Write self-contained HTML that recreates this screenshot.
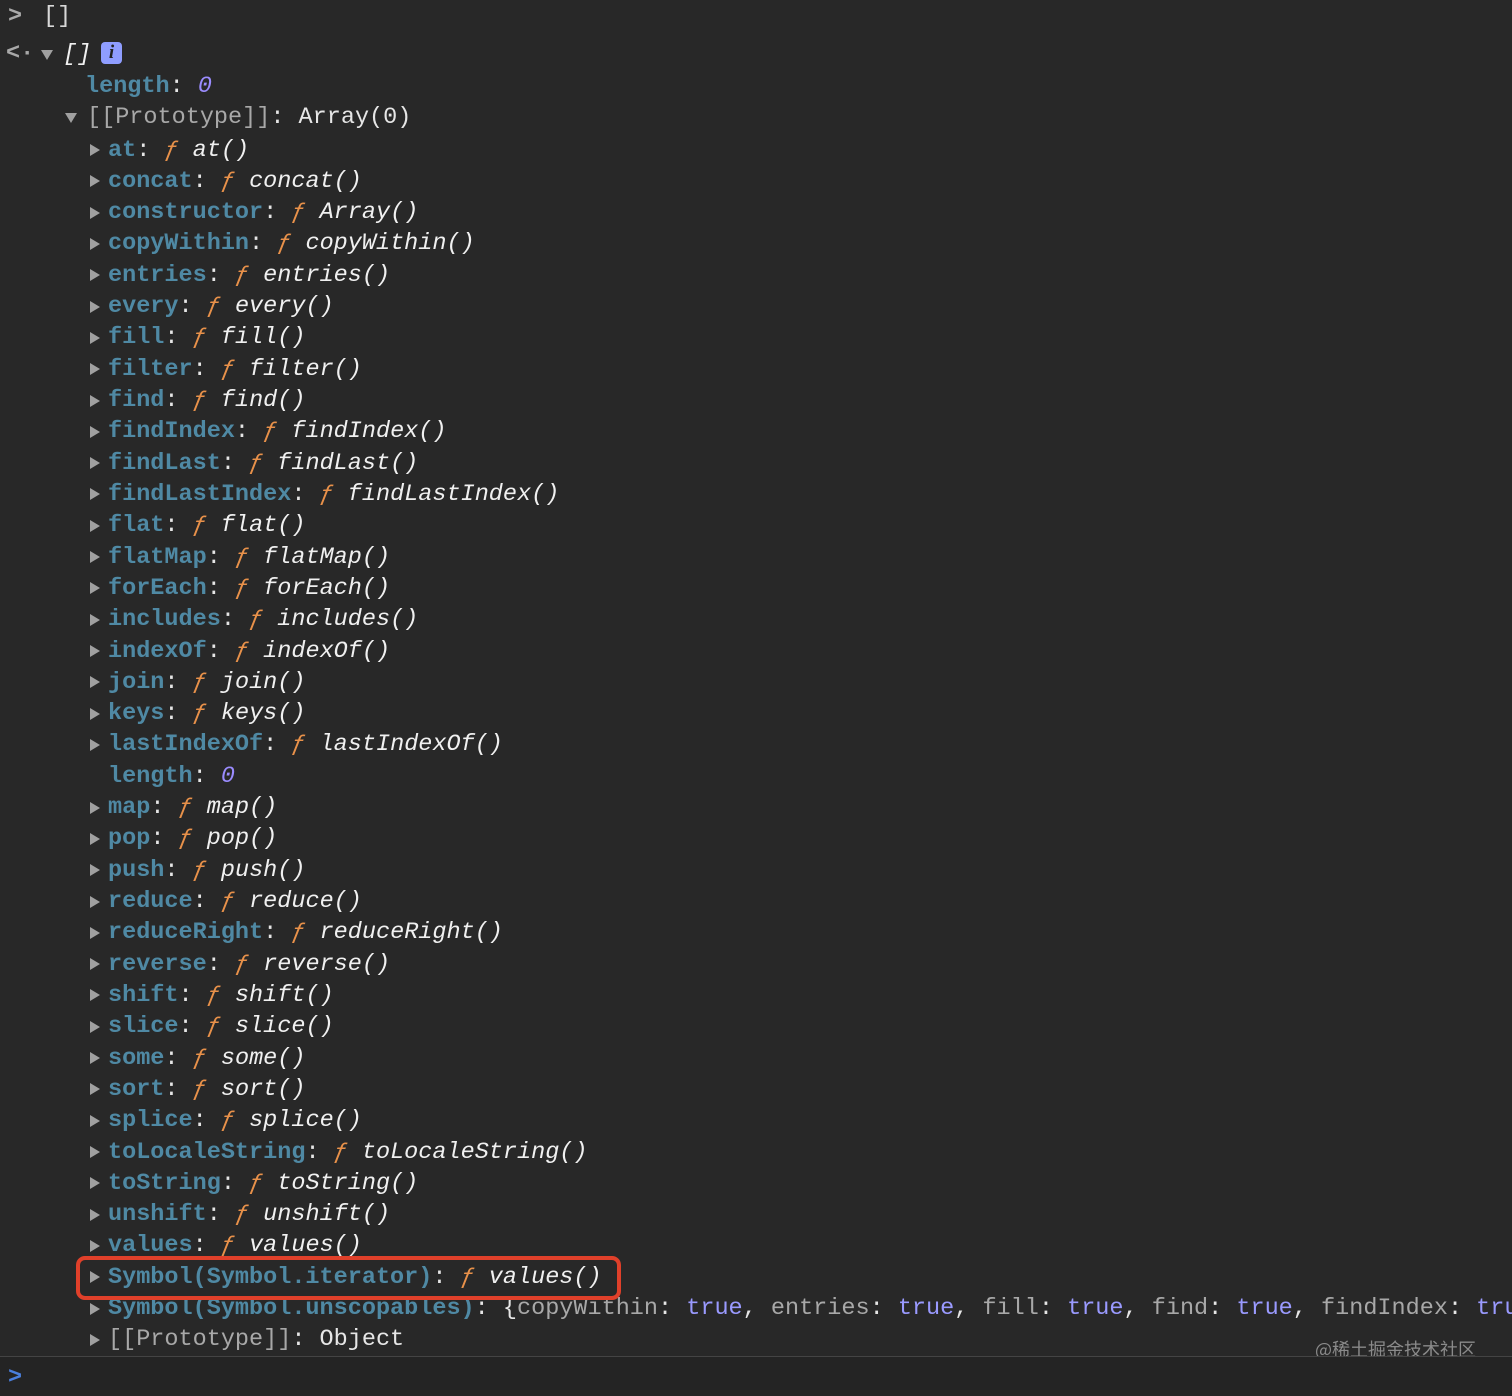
<!DOCTYPE html>
<html><head><meta charset="utf-8"><style>
body{margin:0;width:1512px;height:1395px;background:#282828;overflow:hidden;position:relative;font-family:"Liberation Mono",monospace;font-size:23.5px;color:#e6e6e6}
.r{position:absolute;white-space:pre;height:31.32px;line-height:31.32px}
.k{color:#4f89a4;font-weight:bold}
.f{color:#e8914a;font-style:italic}
.i{font-style:italic;color:#f0f0f0}
.n{color:#9b8cff}
.g{color:#a8a8a8}
.t{color:#9a9aff}
.tri{position:absolute;width:0;height:0;border-top:6px solid transparent;border-bottom:6px solid transparent;border-left:10px solid #a0a0a0}
.tri.d{border-left:6px solid transparent;border-right:6px solid transparent;border-top:10px solid #a0a0a0;border-bottom:0}
#list{position:absolute;left:0;top:134.5px;width:1512px}
#list .r{position:relative;left:108px}
#list .tri{left:-18px;top:9.5px}
</style></head><body>
<div class="r g" style="left:8px;top:1px;font-weight:bold">&gt;</div>
<div class="r" style="left:43px;top:1px;color:#d8d8d8">[]</div>
<div class="r g" style="left:6px;top:38px;font-weight:bold">&lt;·</div>
<div class="tri d" style="left:41px;top:50px"></div>
<div class="r i" style="left:63px;top:39px">[]</div>
<div style="position:absolute;left:101px;top:42px;width:21px;height:22px;background:#8f9dff;border-radius:4px;color:#222;font:italic bold 19px 'Liberation Serif',serif;text-align:center;line-height:22px">i</div>
<div class="r" style="left:85px;top:71px"><span class="k">length</span>: <span class="n" style="font-style:italic">0</span></div>
<div class="tri d" style="left:65px;top:113px"></div>
<div class="r" style="left:87px;top:102px"><span class="g">[[Prototype]]</span>: Array(0)</div>
<div id="list">
<div class="r"><span class="tri"></span><span class="k">at</span>: <span class="f">ƒ</span> <span class="i">at()</span></div>
<div class="r"><span class="tri"></span><span class="k">concat</span>: <span class="f">ƒ</span> <span class="i">concat()</span></div>
<div class="r"><span class="tri"></span><span class="k">constructor</span>: <span class="f">ƒ</span> <span class="i">Array()</span></div>
<div class="r"><span class="tri"></span><span class="k">copyWithin</span>: <span class="f">ƒ</span> <span class="i">copyWithin()</span></div>
<div class="r"><span class="tri"></span><span class="k">entries</span>: <span class="f">ƒ</span> <span class="i">entries()</span></div>
<div class="r"><span class="tri"></span><span class="k">every</span>: <span class="f">ƒ</span> <span class="i">every()</span></div>
<div class="r"><span class="tri"></span><span class="k">fill</span>: <span class="f">ƒ</span> <span class="i">fill()</span></div>
<div class="r"><span class="tri"></span><span class="k">filter</span>: <span class="f">ƒ</span> <span class="i">filter()</span></div>
<div class="r"><span class="tri"></span><span class="k">find</span>: <span class="f">ƒ</span> <span class="i">find()</span></div>
<div class="r"><span class="tri"></span><span class="k">findIndex</span>: <span class="f">ƒ</span> <span class="i">findIndex()</span></div>
<div class="r"><span class="tri"></span><span class="k">findLast</span>: <span class="f">ƒ</span> <span class="i">findLast()</span></div>
<div class="r"><span class="tri"></span><span class="k">findLastIndex</span>: <span class="f">ƒ</span> <span class="i">findLastIndex()</span></div>
<div class="r"><span class="tri"></span><span class="k">flat</span>: <span class="f">ƒ</span> <span class="i">flat()</span></div>
<div class="r"><span class="tri"></span><span class="k">flatMap</span>: <span class="f">ƒ</span> <span class="i">flatMap()</span></div>
<div class="r"><span class="tri"></span><span class="k">forEach</span>: <span class="f">ƒ</span> <span class="i">forEach()</span></div>
<div class="r"><span class="tri"></span><span class="k">includes</span>: <span class="f">ƒ</span> <span class="i">includes()</span></div>
<div class="r"><span class="tri"></span><span class="k">indexOf</span>: <span class="f">ƒ</span> <span class="i">indexOf()</span></div>
<div class="r"><span class="tri"></span><span class="k">join</span>: <span class="f">ƒ</span> <span class="i">join()</span></div>
<div class="r"><span class="tri"></span><span class="k">keys</span>: <span class="f">ƒ</span> <span class="i">keys()</span></div>
<div class="r"><span class="tri"></span><span class="k">lastIndexOf</span>: <span class="f">ƒ</span> <span class="i">lastIndexOf()</span></div>
<div class="r"><span class="k">length</span>: <span class="n" style="font-style:italic">0</span></div>
<div class="r"><span class="tri"></span><span class="k">map</span>: <span class="f">ƒ</span> <span class="i">map()</span></div>
<div class="r"><span class="tri"></span><span class="k">pop</span>: <span class="f">ƒ</span> <span class="i">pop()</span></div>
<div class="r"><span class="tri"></span><span class="k">push</span>: <span class="f">ƒ</span> <span class="i">push()</span></div>
<div class="r"><span class="tri"></span><span class="k">reduce</span>: <span class="f">ƒ</span> <span class="i">reduce()</span></div>
<div class="r"><span class="tri"></span><span class="k">reduceRight</span>: <span class="f">ƒ</span> <span class="i">reduceRight()</span></div>
<div class="r"><span class="tri"></span><span class="k">reverse</span>: <span class="f">ƒ</span> <span class="i">reverse()</span></div>
<div class="r"><span class="tri"></span><span class="k">shift</span>: <span class="f">ƒ</span> <span class="i">shift()</span></div>
<div class="r"><span class="tri"></span><span class="k">slice</span>: <span class="f">ƒ</span> <span class="i">slice()</span></div>
<div class="r"><span class="tri"></span><span class="k">some</span>: <span class="f">ƒ</span> <span class="i">some()</span></div>
<div class="r"><span class="tri"></span><span class="k">sort</span>: <span class="f">ƒ</span> <span class="i">sort()</span></div>
<div class="r"><span class="tri"></span><span class="k">splice</span>: <span class="f">ƒ</span> <span class="i">splice()</span></div>
<div class="r"><span class="tri"></span><span class="k">toLocaleString</span>: <span class="f">ƒ</span> <span class="i">toLocaleString()</span></div>
<div class="r"><span class="tri"></span><span class="k">toString</span>: <span class="f">ƒ</span> <span class="i">toString()</span></div>
<div class="r"><span class="tri"></span><span class="k">unshift</span>: <span class="f">ƒ</span> <span class="i">unshift()</span></div>
<div class="r"><span class="tri"></span><span class="k">values</span>: <span class="f">ƒ</span> <span class="i">values()</span></div>
<div class="r"><span class="tri"></span><span class="k">Symbol(Symbol.iterator)</span>: <span class="f">ƒ</span> <span class="i">values()</span></div>
<div class="r"><span class="tri"></span><span class="k">Symbol(Symbol.unscopables)</span>: {<span class="g">copyWithin</span>: <span class="t">true</span>, <span class="g">entries</span>: <span class="t">true</span>, <span class="g">fill</span>: <span class="t">true</span>, <span class="g">find</span>: <span class="t">true</span>, <span class="g">findIndex</span>: <span class="t">true</span></div>
<div class="r"><span class="tri"></span><span class="g">[[Prototype]]</span>: Object</div>
</div>
<div style="position:absolute;left:76px;top:1256px;width:537px;height:36px;border:4px solid #e0402a;border-radius:9px"></div>
<div style="position:absolute;left:1315px;top:1336px;font:18px 'Noto Sans CJK SC',sans-serif;color:#8a8a8a">@稀土掘金技术社区</div>
<div style="position:absolute;left:0;top:1356px;width:1512px;height:39px;background:#242424;border-top:1.5px solid #444"></div>
<div class="r" style="left:8px;top:1362px;color:#4a7fdc;font-weight:bold">&gt;</div>
</body></html>
